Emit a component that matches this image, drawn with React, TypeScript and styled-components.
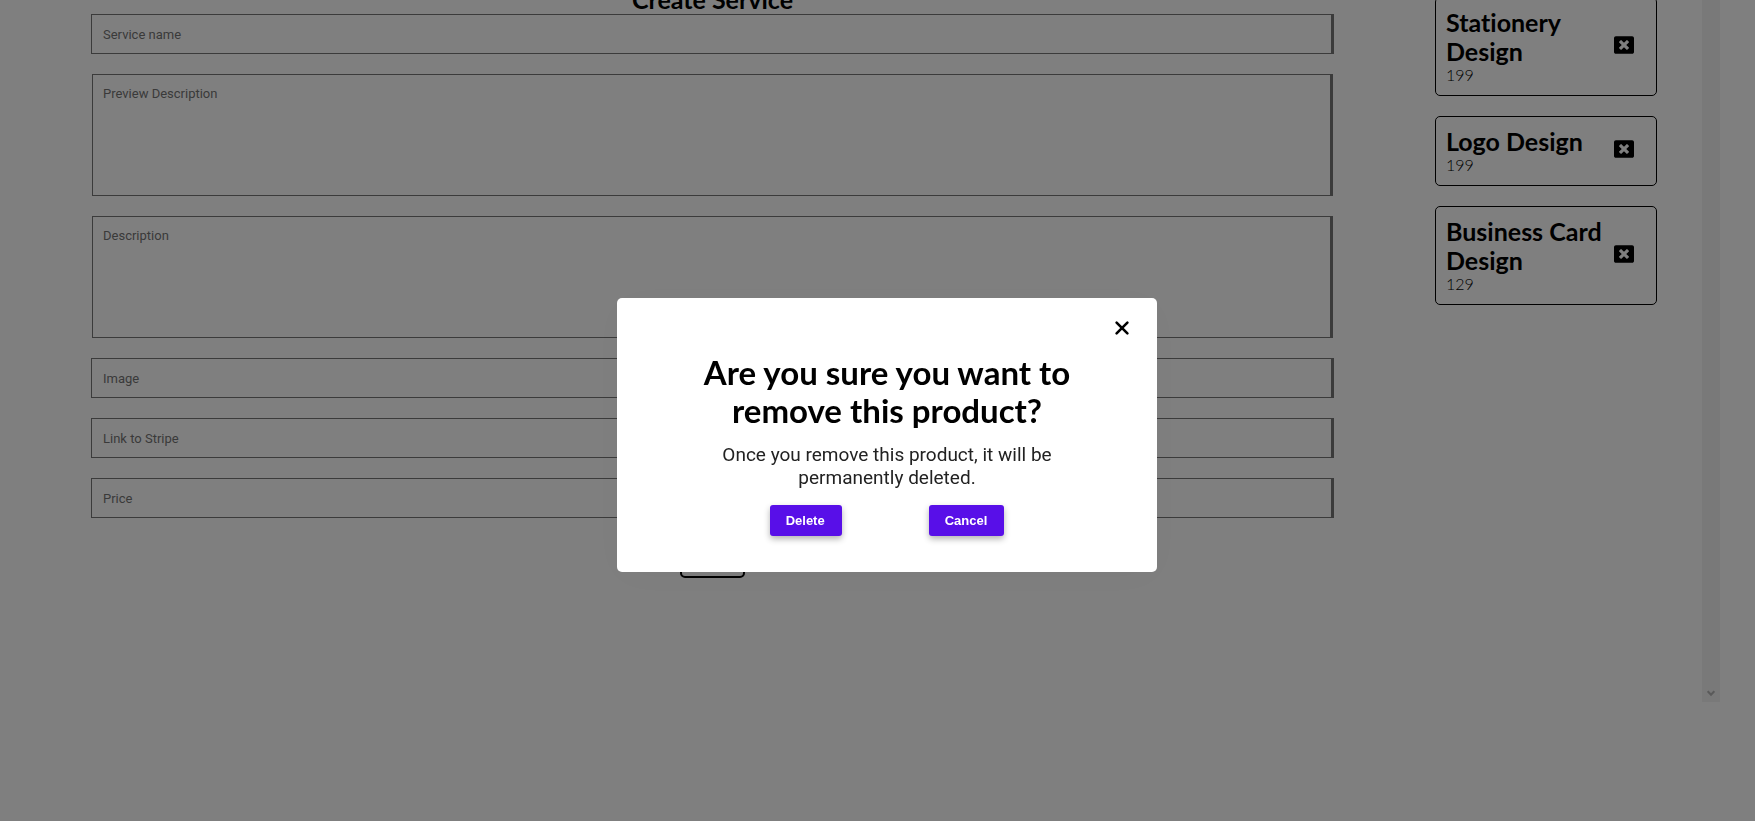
import React from "react";
import styled, { createGlobalStyle } from "styled-components";
import { FaWindowClose } from "react-icons/fa";

const headingFont = `Lato, "Liberation Sans", sans-serif`;
const bodyFont = `Roboto, "Liberation Sans", sans-serif`;
const buttonFont = `"Liberation Sans", Arial, sans-serif`;

const GlobalStyle = createGlobalStyle`
  * { box-sizing: border-box; }
  html, body { margin: 0; overflow: hidden; background: #fff; }
  body { font-family: ${bodyFont}; color: #000; }
  h1, h2, h3, p { margin: 0; }
  h1, h2, h3 { font-variant-ligatures: none; }
`;

const Page = styled.div`
  display: flex;
  align-items: flex-start;
  height: 100vh;
  padding-right: 35px;
  overflow: hidden;
`;

const Main = styled.main`
  flex: 1;
  display: flex;
  align-items: flex-start;
  gap: 101px;
  padding: 0 45px 0 91px;
`;

const Form = styled.form`
  flex: 1;
  display: flex;
  flex-direction: column;
  align-items: center;
  gap: 20px;
  margin-top: -15px;
`;

const FormTitle = styled.h2`
  margin-bottom: -20px;
  font-family: ${headingFont};
  font-size: 25px;
  line-height: 29px;
`;

const Input = styled.input`
  width: 100%;
  height: 40px;
  padding: 10px 11px;
  border: 1px solid #767676;
  border-right-width: 3px;
  font: 400 13px/16px ${bodyFont};
  outline: none;
  &::placeholder { color: #757575; }
`;

const TextArea = styled.textarea`
  display: block;
  width: calc(100% - 2px);
  height: 122px;
  padding: 11px 10px;
  border: 1px solid #767676;
  border-right-width: 3px;
  font: 400 13px/16px ${bodyFont};
  resize: none;
  outline: none;
  &::placeholder { color: #757575; }
`;

const SubmitButton = styled.button`
  height: 40px;
  padding: 0 12px;
  border: 2px solid #000;
  border-radius: 5px;
  background: #fff;
  font: 400 13px/16px ${bodyFont};
`;

const Products = styled.aside`
  width: 222px;
  display: flex;
  flex-direction: column;
  gap: 20px;
  margin-top: -3px;
`;

const Card = styled.article`
  display: flex;
  align-items: center;
  justify-content: space-between;
  padding: 10px 22px 12px 10px;
  border: 1px solid #000;
  border-radius: 5px;
`;

const CardTitle = styled.h3`
  font-family: ${headingFont};
  font-size: 25px;
  line-height: 29px;
`;

const CardPrice = styled.p`
  font: 300 16px/17px ${headingFont};
`;

const RemoveButton = styled.button`
  display: flex;
  padding: 0 0 2px;
  border: 0;
  background: none;
  color: #000;
`;

const Scrollbar = styled.div`
  width: 18px;
  height: 702px;
  display: flex;
  align-items: flex-end;
  justify-content: center;
  padding-bottom: 5px;
  background: #f3f3f3;
`;

const Overlay = styled.div`
  position: fixed;
  inset: 0;
  display: flex;
  align-items: center;
  justify-content: center;
  padding: 49px 0 0 19px;
  background: rgba(0, 0, 0, 0.5);
`;

const Dialog = styled.section`
  width: 540px;
  display: flex;
  flex-direction: column;
  align-items: center;
  padding: 20px 25px 36px;
  border-radius: 5px;
  background: #fff;
  box-shadow: 0 5px 40px rgba(0, 0, 0, 0.03);
  text-align: center;
`;

const CloseButton = styled.button`
  display: flex;
  align-self: flex-end;
  padding: 0;
  border: 0;
  background: none;
  color: #000;
`;

const DialogTitle = styled.h1`
  width: 420px;
  margin-top: 15px;
  font-family: ${headingFont};
  font-size: 33px;
  line-height: 38px;
`;

const DialogText = styled.p`
  width: 360px;
  margin-top: 14px;
  font: 400 19px/23px ${bodyFont};
  color: #222;
`;

const Actions = styled.div`
  display: flex;
  gap: 87px;
  margin-top: 16px;
`;

const ActionButton = styled.button`
  height: 31px;
  padding: 0 17px 0 16px;
  border: 0;
  border-radius: 3px;
  background: #580fe8;
  color: #fff;
  font: 700 13px/15px ${buttonFont};
  box-shadow: 0 3px 6px rgba(0, 0, 0, 0.3);
`;

const products = [
  { name: "Stationery Design", price: 199 },
  { name: "Logo Design", price: 199 },
  { name: "Business Card Design", price: 129 },
];

export default function App() {
  return (
    <>
      <GlobalStyle />
      <Page>
        <Main>
          <Form onSubmit={(e) => e.preventDefault()}>
            <FormTitle>Create Service</FormTitle>
            <Input aria-label="Service name" placeholder="Service name" />
            <TextArea aria-label="Preview Description" placeholder="Preview Description" />
            <TextArea aria-label="Description" placeholder="Description" />
            <Input aria-label="Image" placeholder="Image" />
            <Input aria-label="Link to Stripe" placeholder="Link to Stripe" />
            <Input aria-label="Price" placeholder="Price" />
            <SubmitButton type="submit">Create</SubmitButton>
          </Form>
          <Products>
            {products.map((p) => (
              <Card key={p.name}>
                <div>
                  <CardTitle>{p.name}</CardTitle>
                  <CardPrice>{p.price}</CardPrice>
                </div>
                <RemoveButton type="button" aria-label={`Remove ${p.name}`}>
                  <FaWindowClose size={20} />
                </RemoveButton>
              </Card>
            ))}
          </Products>
        </Main>
        <Scrollbar>
          <svg width="8" height="7" viewBox="0 0 8 7" fill="none" stroke="#b4b4b4" strokeWidth="2">
            <path d="M.7 1.2L4 4.7l3.3-3.5" />
          </svg>
        </Scrollbar>
      </Page>
      <Overlay>
        <Dialog role="dialog" aria-modal="true" aria-labelledby="remove-title">
          <CloseButton type="button" aria-label="Close">
            <svg width="20" height="20" viewBox="0 0 20 20" fill="none" stroke="currentColor" strokeWidth="2.6" strokeLinecap="round">
              <path d="M4.6 4.6l10.8 10.8M15.4 4.6L4.6 15.4" />
            </svg>
          </CloseButton>
          <DialogTitle id="remove-title">Are you sure you want to remove this product?</DialogTitle>
          <DialogText>Once you remove this product, it will be permanently deleted.</DialogText>
          <Actions>
            <ActionButton type="button">Delete</ActionButton>
            <ActionButton type="button">Cancel</ActionButton>
          </Actions>
        </Dialog>
      </Overlay>
    </>
  );
}
